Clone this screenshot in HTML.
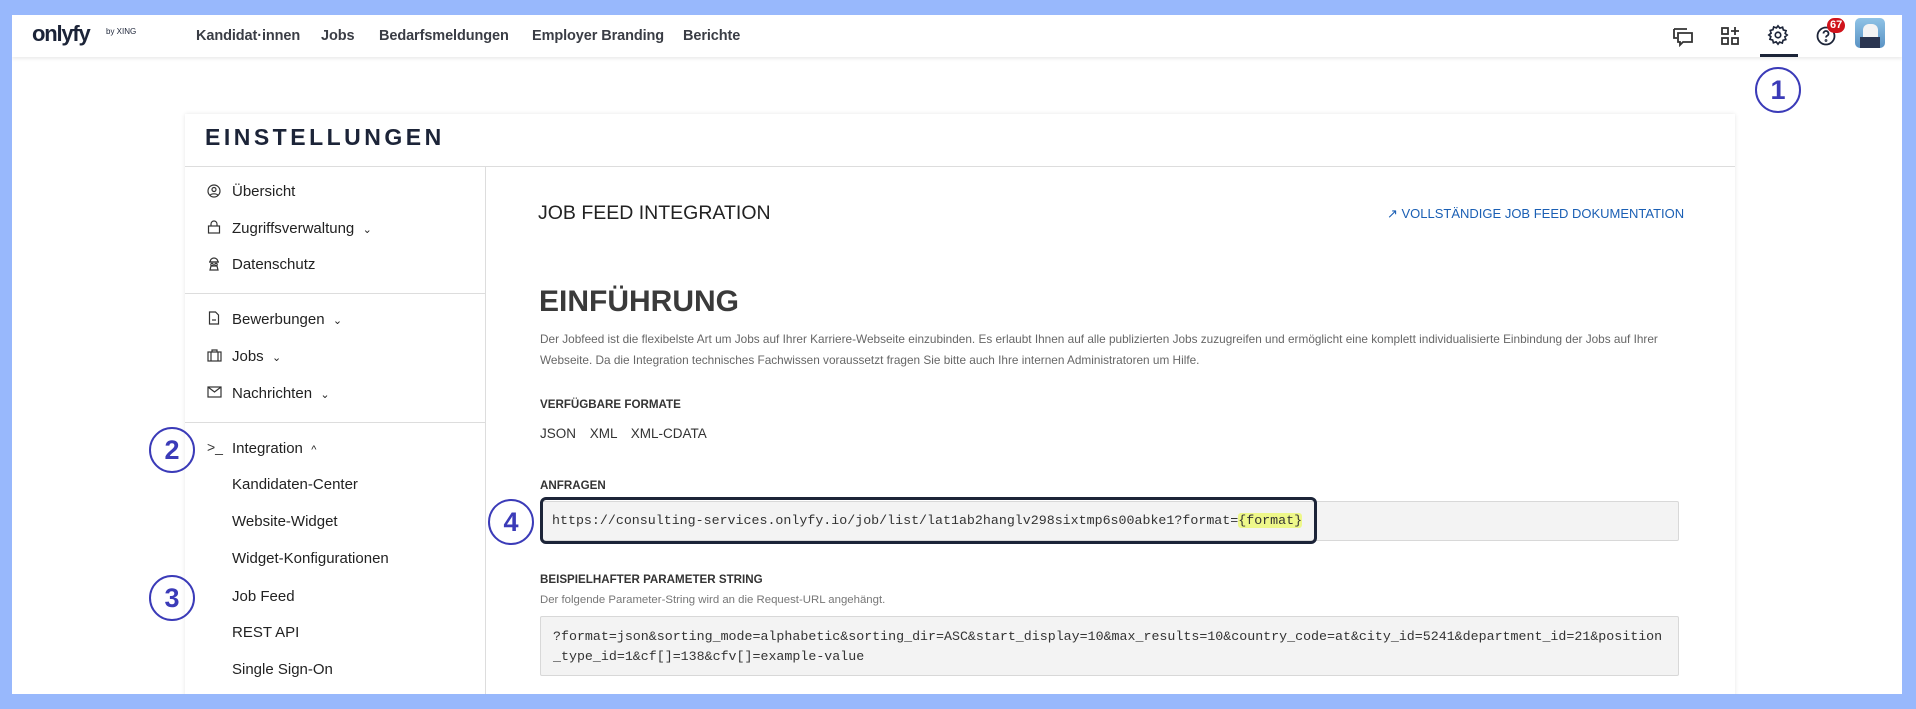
<!DOCTYPE html>
<html><head><meta charset="utf-8">
<style>
*{box-sizing:border-box;margin:0;padding:0}
body{width:1916px;height:709px;background:#98b8fc;font-family:"Liberation Sans",sans-serif;position:relative;overflow:hidden;color:#222}
.page{position:absolute;left:12px;top:15px;width:1890px;height:679px;background:#fff;overflow:hidden}
.hdr{position:absolute;left:0;top:0;width:1890px;height:42px;background:#fff;box-shadow:0 2px 3px rgba(0,0,0,.08)}
.abs{position:absolute}
.nav{position:absolute;top:13px;font-size:14.5px;font-weight:bold;color:#3a3d45;letter-spacing:-.1px}
.card{position:absolute;left:173px;top:99px;width:1550px;height:600px;background:#fff;box-shadow:0 0 4px rgba(0,0,0,.1)}
.title{position:absolute;left:20px;top:10px;font-size:23px;font-weight:bold;letter-spacing:3.5px;color:#1c2438}
.sep{position:absolute;left:0;top:52px;width:1550px;height:1px;background:#ddd}
.vsep{position:absolute;left:300px;top:52px;width:1px;height:560px;background:#ddd}
.si{position:absolute;left:47px;font-size:15px;color:#222}
.ic{position:absolute;left:22px}
.hsep{position:absolute;left:0;width:300px;height:1px;background:#ddd}
.circ{position:absolute;width:46px;height:46px;border:2px solid #3b3bb8;border-radius:50%;color:#3b3bb8;font-size:27px;font-weight:bold;text-align:center;line-height:42px}
.lbl{position:absolute;font-size:11.6px;font-weight:bold;color:#333}
.mono{font-family:"Liberation Mono",monospace;font-size:13.3px;color:#333}
</style></head><body>
<div class="page">
 <div class="hdr">
  <div class="abs" style="left:20px;top:6px;font-size:22px;font-weight:bold;color:#1c2438;letter-spacing:-1.2px">onlyfy</div>
  <div class="abs" style="left:94px;top:12px;font-size:8px;color:#1c2438">by XING</div>
  <div class="nav" style="left:184px">Kandidat·innen</div>
  <div class="nav" style="left:309px">Jobs</div>
  <div class="nav" style="left:367px">Bedarfsmeldungen</div>
  <div class="nav" style="left:520px">Employer Branding</div>
  <div class="nav" style="left:671px">Berichte</div>
  <svg class="abs" style="left:1660px;top:10px" width="22" height="22" viewBox="0 0 22 22" fill="none" stroke="#333" stroke-width="1.8"><path d="M2 4h13M2 4v9h3"/><path d="M6 8h14v9h-9l-3 3v-3H6z"/></svg>
  <svg class="abs" style="left:1708px;top:10px" width="22" height="22" viewBox="0 0 22 22" fill="none" stroke="#333" stroke-width="1.8"><rect x="2" y="3" width="6" height="6"/><rect x="2" y="13" width="6" height="6"/><rect x="12" y="13" width="6" height="6"/><path d="M15 2v8M11 6h8"/></svg>
  <svg class="abs" style="left:1755px;top:9px" width="22" height="22" viewBox="0 0 24 24" fill="none" stroke="#1c2438" stroke-width="1.8"><circle cx="12" cy="12" r="3"/><path d="M12 2l2 2.5 3-1 .8 3 3 .8-1 3L22 12l-2.5 2 1 3-3 .8-.8 3-3-1L12 22l-2-2.5-3 1-.8-3-3-.8 1-3L2 12l2.5-2-1-3 3-.8.8-3 3 1z"/></svg>
  <div class="abs" style="left:1748px;top:39px;width:38px;height:3px;background:#1c2438"></div>
  <svg class="abs" style="left:1803px;top:10px" width="22" height="22" viewBox="0 0 22 22" fill="none" stroke="#1c2438" stroke-width="1.8"><circle cx="11" cy="11" r="8.5"/><path d="M8.5 8.5a2.5 2.5 0 1 1 3.5 2.3c-.7.4-1 .8-1 1.7"/><circle cx="11" cy="15.5" r=".5"/></svg>
  <div class="abs" style="left:1815px;top:3px;height:15px;padding:0 3px;border-radius:8px;background:#d0131b;color:#fff;font-size:11px;font-weight:bold;line-height:15px">67</div>
  <div class="abs" style="left:1843px;top:3px;width:30px;height:30px;border-radius:5px;background:linear-gradient(#8fc3e6,#5a93c4);overflow:hidden"><div style="position:absolute;left:8px;top:6px;width:15px;height:20px;background:#f4f4f4;border-radius:6px"></div><div style="position:absolute;left:5px;top:19px;width:20px;height:11px;background:#2a3550"></div></div>
 </div>
 <div class="circ" style="left:1743px;top:52px">1</div>

 <div class="card">
  <div class="title">EINSTELLUNGEN</div>
  <div class="sep"></div>
  <div class="vsep"></div>
  <svg class="ic" style="top:70px" width="14" height="14" viewBox="0 0 14 14" fill="none" stroke="#333" stroke-width="1.2"><circle cx="7" cy="7" r="6"/><circle cx="7" cy="5.5" r="2"/><path d="M3.2 11.3c1-2 6.6-2 7.6 0"/></svg>
  <div class="si" style="top:69px">Übersicht</div>
  <svg class="ic" style="top:106px" width="14" height="14" viewBox="0 0 14 14" fill="none" stroke="#333" stroke-width="1.2"><rect x="1.5" y="6" width="11" height="7"/><path d="M4 6V4a3 3 0 0 1 6 0v2"/></svg>
  <div class="si" style="top:106px">Zugriffsverwaltung &nbsp;<span style="font-size:11px">⌄</span></div>
  <svg class="ic" style="top:142px" width="14" height="15" viewBox="0 0 14 15" fill="none" stroke="#333" stroke-width="1.2"><path d="M3 6a4 4 0 0 1 8 0z"/><path d="M2 6h10"/><circle cx="5" cy="8.5" r="1.2"/><circle cx="9" cy="8.5" r="1.2"/><path d="M3 14l1-4h6l1 4z"/></svg>
  <div class="si" style="top:142px">Datenschutz</div>
  <div class="hsep" style="top:179px"></div>
  <svg class="ic" style="top:197px" width="14" height="14" viewBox="0 0 14 14" fill="none" stroke="#333" stroke-width="1.2"><path d="M2.5 1h6l3 3v9h-9z"/><path d="M5 9h4"/></svg>
  <div class="si" style="top:197px">Bewerbungen &nbsp;<span style="font-size:11px">⌄</span></div>
  <svg class="ic" style="top:234px" width="15" height="14" viewBox="0 0 15 14" fill="none" stroke="#333" stroke-width="1.2"><rect x="1" y="4" width="13" height="9"/><path d="M5 4V2h5v2M4 4v9M11 4v9"/></svg>
  <div class="si" style="top:234px">Jobs &nbsp;<span style="font-size:11px">⌄</span></div>
  <svg class="ic" style="top:272px" width="15" height="12" viewBox="0 0 15 12" fill="none" stroke="#333" stroke-width="1.2"><rect x="1" y="1" width="13" height="10"/><path d="M1 1l6.5 5 6.5-5"/></svg>
  <div class="si" style="top:271px">Nachrichten &nbsp;<span style="font-size:11px">⌄</span></div>
  <div class="hsep" style="top:308px"></div>
  <div class="ic" style="top:325px;font-size:14px;color:#333;left:22px">&gt;_</div>
  <div class="si" style="top:326px">Integration &nbsp;<span style="font-size:11px">^</span></div>
  <div class="si" style="top:362px">Kandidaten-Center</div>
  <div class="si" style="top:399px">Website-Widget</div>
  <div class="si" style="top:436px">Widget-Konfigurationen</div>
  <div class="si" style="top:474px">Job Feed</div>
  <div class="si" style="top:510px">REST API</div>
  <div class="si" style="top:547px">Single Sign-On</div>

  <div class="abs" style="left:353px;top:88px;font-size:19.5px;color:#222">JOB FEED INTEGRATION</div>
  <div class="abs" style="left:1202px;top:92px;font-size:13px;color:#1a5fb4">&#x2197;&#xFE0E; VOLLSTÄNDIGE JOB FEED DOKUMENTATION</div>
  <div class="abs" style="left:354px;top:171px;font-size:30px;font-weight:bold;color:#3a3a3a">EINFÜHRUNG</div>
  <div class="abs" style="left:355px;top:215px;font-size:11.8px;color:#666;line-height:21px;white-space:nowrap">Der Jobfeed ist die flexibelste Art um Jobs auf Ihrer Karriere-Webseite einzubinden. Es erlaubt Ihnen auf alle publizierten Jobs zuzugreifen und ermöglicht eine komplett individualisierte Einbindung der Jobs auf Ihrer<br>Webseite. Da die Integration technisches Fachwissen voraussetzt fragen Sie bitte auch Ihre internen Administratoren um Hilfe.</div>
  <div class="lbl" style="left:355px;top:284px">VERFÜGBARE FORMATE</div>
  <div class="abs" style="left:355px;top:312px;font-size:13.5px;color:#333;word-spacing:10px">JSON XML XML-CDATA</div>
  <div class="lbl" style="left:355px;top:365px">ANFRAGEN</div>
  <div class="abs" style="left:355px;top:387px;width:1139px;height:40px;background:#f3f3f3;border:1px solid #d8d8d8;border-radius:2px"></div>
  <div class="abs" style="left:355px;top:383px;width:777px;height:47px;border:3.5px solid #1c2438;border-radius:6px"></div>
  <div class="abs mono" style="left:367px;top:399px">https://consulting-services.onlyfy.io/job/list/lat1ab2hanglv298sixtmp6s00abke1?format=<span style="background:#eef88a;border-radius:3px">{format}</span></div>
  <div class="lbl" style="left:355px;top:459px">BEISPIELHAFTER PARAMETER STRING</div>
  <div class="abs" style="left:355px;top:480px;font-size:11.4px;color:#777">Der folgende Parameter-String wird an die Request-URL angehängt.</div>
  <div class="abs mono" style="left:355px;top:502px;width:1139px;height:60px;background:#f3f3f3;border:1px solid #d8d8d8;border-radius:2px;padding:10px 0 0 12px;line-height:20px;white-space:nowrap">?format=json&amp;sorting_mode=alphabetic&amp;sorting_dir=ASC&amp;start_display=10&amp;max_results=10&amp;country_code=at&amp;city_id=5241&amp;department_id=21&amp;position<br>_type_id=1&amp;cf[]=138&amp;cfv[]=example-value</div>
 </div>
 <div class="circ" style="left:137px;top:412px">2</div>
 <div class="circ" style="left:137px;top:560px">3</div>
 <div class="circ" style="left:476px;top:484px">4</div>
</div>
</body></html>
